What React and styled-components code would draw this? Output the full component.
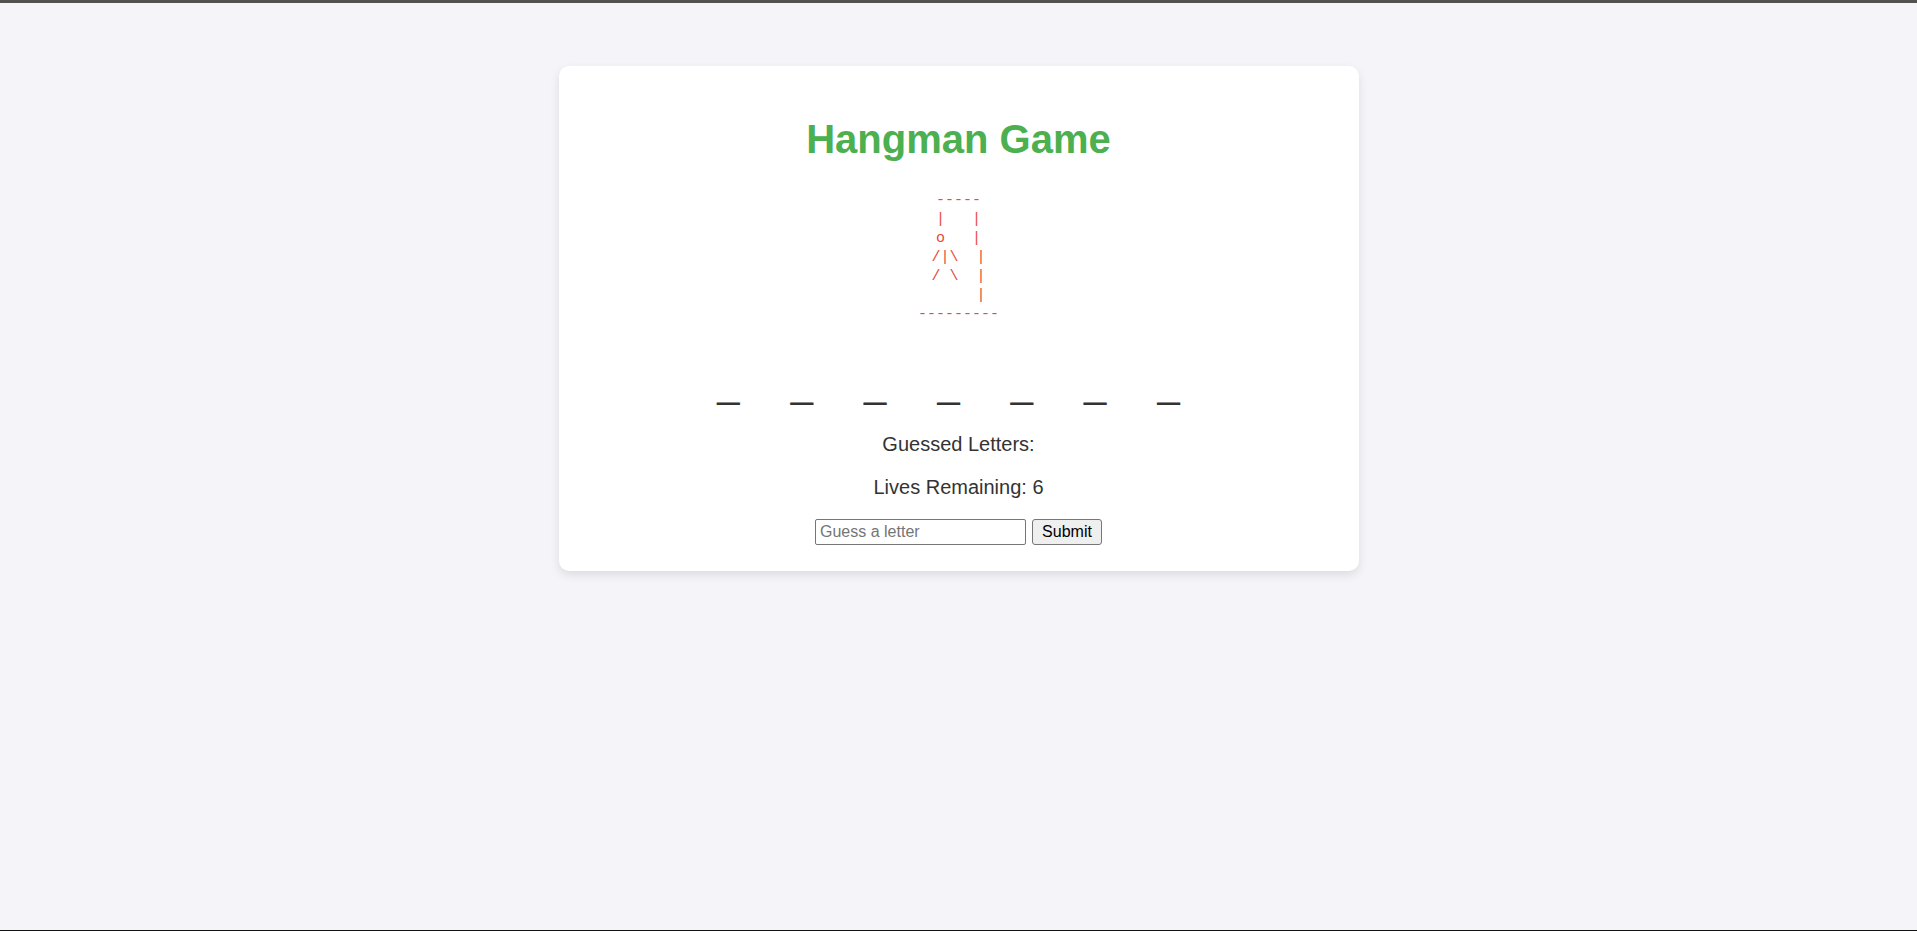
import { useState } from "react";
import styled, { createGlobalStyle } from "styled-components";

const GlobalStyle = createGlobalStyle`
  html, body {
    margin: 0;
    padding: 0;
  }
  body {
    background-color: #f4f4f9;
    font-family: "Liberation Sans", Arial, sans-serif;
    color: #333;
  }
`;

const Page = styled.div`
  min-height: 100vh;
  box-sizing: border-box;
  border-top: 3px solid #525252;
  border-bottom: 1px solid #111;
  display: flex;
  flex-direction: column;
  align-items: center;
`;

const Card = styled.main`
  width: 800px;
  box-sizing: border-box;
  margin-top: 63px;
  padding: 20px 20px 21px;
  background-color: #fff;
  border-radius: 10px;
  box-shadow: 0 4px 10px rgba(0, 0, 0, 0.1);
  text-align: center;
`;

const Title = styled.h1`
  margin: 31px 0 29px;
  font-size: 40px;
  font-weight: bold;
  color: #4caf50;
`;

const Gallows = styled.pre`
  margin: 0;
  font-family: "Liberation Mono", "DejaVu Sans Mono", monospace;
  font-size: 15px;
  line-height: 19px;
  color: #e74c3c;
  text-align: center;
`;

const Word = styled.div`
  margin: 37px 0 27px;
  font-size: 40px;
  letter-spacing: 20px;
  color: #333;
`;

const Info = styled.p`
  margin: 20px 0;
  font-size: 20px;
  color: #333;
`;

const GuessForm = styled.form`
  display: flex;
  justify-content: center;
  gap: 6px;
  margin: 20px 0 5px;
`;

const LetterInput = styled.input`
  width: 211px;
  height: 26px;
  box-sizing: border-box;
  padding: 0 4px;
  font-family: "Liberation Sans", Arial, sans-serif;
  font-size: 16px;
  color: #333;
  border: 1px solid #767676;
  border-radius: 2px;
  background: #fff;

  &::placeholder {
    color: #757575;
  }
`;

const SubmitButton = styled.button`
  width: 70px;
  height: 26px;
  box-sizing: border-box;
  padding: 0 9px;
  font-family: "Liberation Sans", Arial, sans-serif;
  font-size: 16px;
  color: #000;
  background-color: #efefef;
  border: 1px solid #767676;
  border-radius: 3px;
  cursor: pointer;
`;

// each line is centred on its own, like the original pre
const stage = [
  "-----",
  "|   |",
  "o   |",
  "/|\\  |",
  "/ \\  |",
  "     |",
  "---------",
].join("\n");

const secret = "RUNTIME";

export default function App() {
  const [guess, setGuess] = useState("");
  const [guessed, setGuessed] = useState([]);
  const lives = 6;

  const shown = secret
    .split("")
    .map((ch) => (guessed.includes(ch) ? ch : "_"))
    .join(" ");

  const handleSubmit = (e) => {
    e.preventDefault();
    const letter = guess.trim().toUpperCase();
    if (letter && !guessed.includes(letter)) setGuessed([...guessed, letter]);
    setGuess("");
  };

  return (
    <>
      <GlobalStyle />
      <Page>
        <Card>
          <Title>Hangman Game</Title>
          <Gallows>{stage}</Gallows>
          <Word>{shown}</Word>
          <Info>Guessed Letters: {guessed.join(", ")}</Info>
          <Info>Lives Remaining: {lives}</Info>
          <GuessForm onSubmit={handleSubmit}>
            <LetterInput
              type="text"
              maxLength={1}
              placeholder="Guess a letter"
              value={guess}
              onChange={(e) => setGuess(e.target.value)}
            />
            <SubmitButton type="submit">Submit</SubmitButton>
          </GuessForm>
        </Card>
      </Page>
    </>
  );
}
